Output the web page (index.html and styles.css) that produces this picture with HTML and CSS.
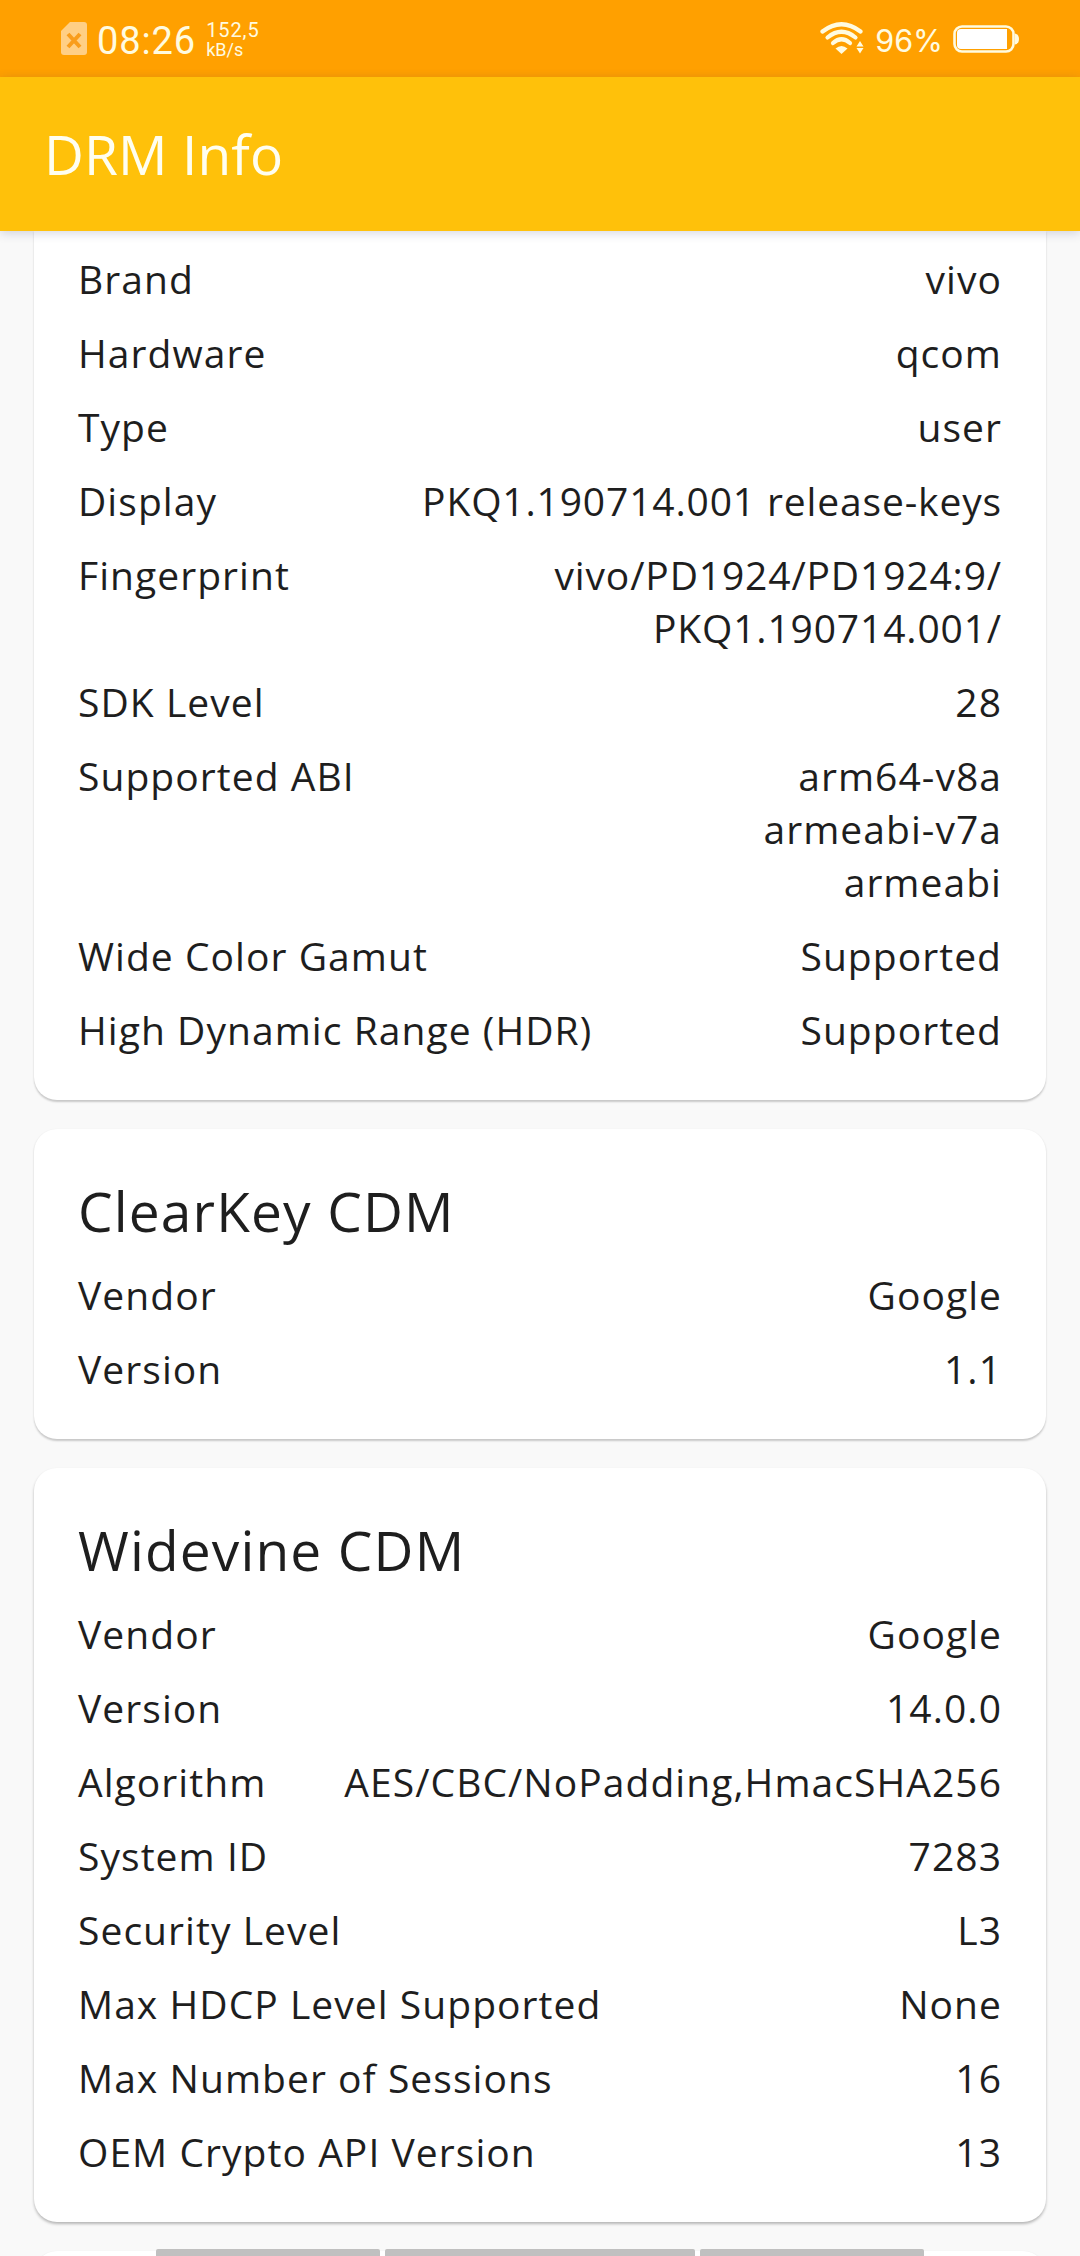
FILE: index.html
```html
<!DOCTYPE html>
<html lang="en">
<head>
  <meta charset="UTF-8">
  <meta name="viewport" content="width=device-width, initial-scale=1.0">
  <title>DRM Info</title>
  <link rel="stylesheet" href="styles.css">
</head>
<body>
  <div class="status-bar">
    <svg class="sim-icon" width="26" height="34" viewBox="0 0 26 34">
      <path fill="#ffcf85" d="M9 0h14a3 3 0 0 1 3 3v27a3 3 0 0 1-3 3H3a3 3 0 0 1-3-3V9z"/>
      <path stroke="#f99d1c" stroke-width="4" d="M7 12l12 13M19 12L7 25"/>
    </svg>
    <span class="clock">08:26</span>
    <div class="net-speed">
      <span class="speed">152,5</span>
      <span class="unit">kB/s</span>
    </div>
    <div class="status-right">
      <svg class="wifi-icon" width="44" height="32" viewBox="0 0 44 32">
        <g fill="none" stroke="#fffbe0" stroke-width="4.200" stroke-linecap="round">
          <path d="M2.500 9.500Q21.500-5 40.500 9.500"/>
          <path d="M7.500 15.500Q21.500 4 35.500 15.500"/>
          <path d="M13 21Q21.500 13.500 30 21"/>
        </g>
        <path fill="#fffbe0" d="M15.500 26.500q6-5 12 0l-6 5.500z"/>
        <path fill="#fffbe0" d="M36.500 24.500l3.500-5.500 3.500 5.500zM36.500 26h7L40 31.500z"/>
      </svg>
      <span class="percent">96%</span>
      <svg class="battery-icon" width="66" height="28" viewBox="0 0 66 28">
        <rect x="1.500" y="1.500" width="59" height="25" rx="7.500" fill="none" stroke="#fffbe0" stroke-width="2.600"/>
        <path fill="#fff" d="M8 4h46v20H8a4 4 0 0 1-4-4V8a4 4 0 0 1 4-4z"/>
        <path fill="#fffbe0" d="M62 8.500q4 1 4 5.500t-4 5.500z"/>
      </svg>
    </div>
  </div>

  <header class="app-bar">
    <h1>DRM Info</h1>
  </header>

  <main class="content">
    <section class="card card-scrolled">
      <div class="row"><span>Brand</span><span class="value">vivo</span></div>
      <div class="row"><span>Hardware</span><span class="value">qcom</span></div>
      <div class="row"><span>Type</span><span class="value">user</span></div>
      <div class="row"><span>Display</span><span class="value build">PKQ1.190714.001 release-keys</span></div>
      <div class="row"><span>Fingerprint</span><span class="value build">vivo/PD1924/PD1924:9/<br>PKQ1.190714.001/</span></div>
      <div class="row"><span>SDK Level</span><span class="value">28</span></div>
      <div class="row"><span>Supported ABI</span><span class="value">arm64-v8a<br>armeabi-v7a<br>armeabi</span></div>
      <div class="row"><span>Wide Color Gamut</span><span class="value">Supported</span></div>
      <div class="row"><span>High Dynamic Range (HDR)</span><span class="value">Supported</span></div>
    </section>

    <section class="card">
      <h2>ClearKey CDM</h2>
      <div class="row"><span>Vendor</span><span class="value">Google</span></div>
      <div class="row"><span>Version</span><span class="value">1.1</span></div>
    </section>

    <section class="card card-raised">
      <h2>Widevine CDM</h2>
      <div class="row"><span>Vendor</span><span class="value">Google</span></div>
      <div class="row"><span>Version</span><span class="value">14.0.0</span></div>
      <div class="row"><span>Algorithm</span><span class="value">AES/CBC/NoPadding,HmacSHA256</span></div>
      <div class="row"><span>System ID</span><span class="value">7283</span></div>
      <div class="row"><span>Security Level</span><span class="value">L3</span></div>
      <div class="row"><span>Max HDCP Level Supported</span><span class="value">None</span></div>
      <div class="row"><span>Max Number of Sessions</span><span class="value">16</span></div>
      <div class="row"><span>OEM Crypto API Version</span><span class="value">13</span></div>
    </section>

    <section class="card"></section>
  </main>

  <!-- gesture bars, drawn over the list -->
  <nav class="gesture-nav">
    <span></span>
    <span class="wide"></span>
    <span></span>
  </nav>
</body>
</html>
```
FILE: styles.css
```css
* {
  box-sizing: border-box;
  margin: 0;
  padding: 0;
}

body {
  position: relative;
  width: 1080px;
  height: 2256px;
  display: flex;
  flex-direction: column;
  overflow: hidden;
  background: #f9f9f9;
  color: #1e1e1e;
  font-family: 'Open Sans', 'Noto Sans', sans-serif;
}

.status-bar {
  flex: none;
  display: flex;
  align-items: center;
  height: 77px;
  padding: 0 61px;
  background: #ffa000;
  color: #fffbe0;
  font-family: Roboto, sans-serif;
}

.clock {
  margin: 4px 0 0 10px;
  font-size: 38px;
  letter-spacing: 0.9px;
}

.net-speed {
  display: flex;
  flex-direction: column;
  gap: 1px;
  margin: 2px 0 0 10px;
}

.speed {
  font-size: 20px;
  line-height: 19px;
  letter-spacing: 0.9px;
}

.unit {
  font-size: 18px;
  line-height: 18px;
}

.status-right {
  display: flex;
  align-items: center;
  margin-left: auto;
}

.wifi-icon {
  margin-top: -2px;
}

.percent {
  margin: 3px 10px 0 11px;
  font-family: Inter, Roboto, sans-serif;
  font-size: 30.5px;
}

.app-bar {
  flex: none;
  display: flex;
  align-items: center;
  height: 154px;
  padding: 0 44px 1px;
  background: #ffc10a;
  box-shadow: 0 2px 10px rgba(40, 50, 90, 0.2);
  z-index: 1;
}

.app-bar h1 {
  color: #fffef0;
  font-size: 55px;
  font-weight: 400;
  letter-spacing: 0.1px;
}

.content {
  flex: 1;
  min-height: 0;
  display: flex;
  flex-direction: column;
  gap: 29px;
  padding: 0 34px;
  overflow: hidden;
}

.card {
  flex: none;
  padding: 44px;
  border-radius: 23px;
  background: #fff;
  box-shadow: 0 1.5px 2px rgba(0, 0, 0, 0.2);
}

.card-scrolled {
  padding-top: 21px;
  border-radius: 0 0 23px 23px;
}

.card-raised {
  box-shadow: 0 2px 3px rgba(0, 0, 0, 0.27);
}

.card h2 {
  font-size: 55px;
  font-weight: 400;
  line-height: 75px;
  letter-spacing: 1.15px;
  margin-bottom: 20px;
}

.row {
  display: flex;
  justify-content: space-between;
  font-size: 39px;
  line-height: 53px;
  letter-spacing: 1.05px;
}

.row + .row {
  margin-top: 21px;
}

.value {
  text-align: right;
}

.build {
  letter-spacing: 0.85px;
}

.gesture-nav {
  position: absolute;
  left: 0;
  right: 0;
  bottom: 0;
  display: flex;
  justify-content: center;
  gap: 5px;
  height: 7px;
}

.gesture-nav span {
  width: 224px;
  border-radius: 2px 2px 0 0;
  background: #c0c0c0;
}

.gesture-nav .wide {
  width: 310px;
}
```
